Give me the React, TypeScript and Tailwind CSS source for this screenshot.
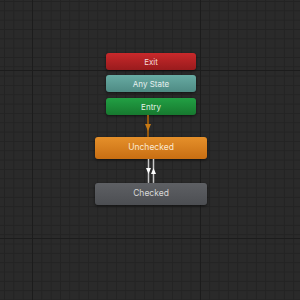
import React from 'react';

const grid =
  'bg-[#2a2a2a] bg-[linear-gradient(#1c1c1c_1px,transparent_1px),linear-gradient(90deg,#1c1c1c_1px,transparent_1px),linear-gradient(#232323_1px,transparent_1px),linear-gradient(90deg,#232323_1px,transparent_1px)] bg-[size:168px_168px,168px_168px,9.333px_9.333px,9.333px_9.333px] bg-[position:0_70px,32px_0,0_1px,4px_0]';

const nodeBase =
  "flex justify-center rounded-[3px] shadow-[0_1px_3px_rgba(0,0,0,0.6)] font-['Inter',sans-serif]";

function SmallState({ label, className }: { label: string; className: string }) {
  return <div className={`${nodeBase} items-center w-[90px] h-[17px] text-[8px] ${className}`}>{label}</div>;
}

function BigState({ label, className }: { label: string; className: string }) {
  return <div className={`${nodeBase} items-start pt-[4px] w-[112px] h-[22px] text-[8.5px] ${className}`}>{label}</div>;
}

export default function App() {
  return (
    <div className={`w-[300px] h-[300px] overflow-hidden flex flex-col items-center pt-[53px] pl-[2px] ${grid}`}>
      <SmallState label="Exit" className="bg-gradient-to-b from-[#c9292b] to-[#991b1d] text-[#f3d8d8]" />
      <div className="h-[5px]" />
      <SmallState label="Any State" className="bg-gradient-to-b from-[#68aba3] to-[#4e8b84] text-[#e6f1ef]" />
      <div className="h-[6px]" />
      <SmallState label="Entry" className="bg-gradient-to-b from-[#22a044] to-[#17792f] text-[#e3f3e6]" />

      {/* Entry -> Unchecked */}
      <svg width="12" height="22" className="-ml-[6px]">
        <line x1="6" y1="0" x2="6" y2="22" stroke="#94580f" strokeWidth="2" />
        <polygon points="3,9 9,9 6,16" fill="#c87a14" />
      </svg>

      <BigState label="Unchecked" className="bg-gradient-to-b from-[#e5902a] to-[#c86e12] text-[#fbe9d3]" />

      {/* Unchecked <-> Checked */}
      <svg width="14" height="24" className="-ml-[1px]">
        <line x1="4.5" y1="0" x2="4.5" y2="24" stroke="#c8c8c8" strokeWidth="1.5" />
        <line x1="9.5" y1="0" x2="9.5" y2="24" stroke="#c8c8c8" strokeWidth="1.5" />
        <polygon points="2,9 7,9 4.5,15" fill="#ffffff" />
        <polygon points="7,15 12,15 9.5,9" fill="#ffffff" />
      </svg>

      <BigState label="Checked" className="bg-gradient-to-b from-[#5e6064] to-[#4c4e52] text-[#d8d8d8]" />
    </div>
  );
}
